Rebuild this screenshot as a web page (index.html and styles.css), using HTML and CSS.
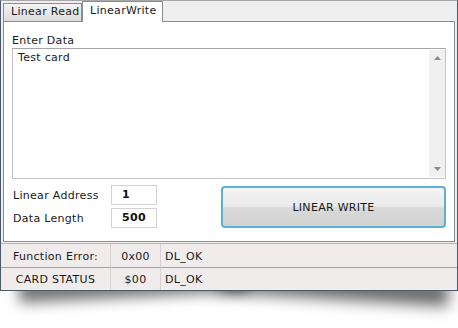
FILE: index.html
```html
<!DOCTYPE html>
<html>
<head>
<meta charset="utf-8">
<link rel="stylesheet" href="styles.css">
</head>
<body>
<div class="window">
  <div class="tabs">
    <div class="tab">Linear Read</div>
    <div class="tab active">LinearWrite</div>
  </div>
  <div class="panel">
    <div class="label">Enter Data</div>
    <div class="textbox">
      <div class="textbox-text">Test card</div>
      <div class="scrollbar">
        <svg width="7" height="4" viewBox="0 0 7 4"><path d="M0 4 L3.5 0 L7 4 Z" fill="#8a8a8a"/></svg>
        <svg width="7" height="4" viewBox="0 0 7 4"><path d="M0 0 L3.5 4 L7 0 Z" fill="#8a8a8a"/></svg>
      </div>
    </div>
    <div class="bottom">
      <div class="fields">
        <div class="field"><span class="field-label">Linear Address</span><span class="input">1</span></div>
        <div class="field"><span class="field-label">Data Length</span><span class="input">500</span></div>
      </div>
      <div class="button">LINEAR WRITE</div>
    </div>
  </div>
  <div class="status">
    <div class="cell c1">Function Error:</div>
    <div class="cell c2">0x00</div>
    <div class="cell c3">DL_OK</div>
    <div class="cell c1 row2">CARD STATUS</div>
    <div class="cell c2 row2">$00</div>
    <div class="cell c3 row2">DL_OK</div>
  </div>
</div>
<div class="shadow"></div>
</body>
</html>
```
FILE: styles.css
```css
html {
  background: #ffffff;
}
body {
  margin: 0;
  padding: 0;
  font-family: "DejaVu Sans", Verdana, sans-serif;
  font-size: 11px;
  letter-spacing: 0.3px;
  color: #1a1a1a;
}
.window {
  position: relative;
  z-index: 2;
  box-sizing: border-box;
  width: 458px;
  height: 291px;
  background: #eeeeee;
  border: 1px solid #4a5a66;
  border-top-color: #a8a8a8;
  display: flex;
  flex-direction: column;
}
.shadow {
  position: relative;
  z-index: 1;
  height: 37px;
  overflow: hidden;
}
.shadow::before,
.shadow::after {
  content: "";
  position: absolute;
  top: -34px;
  width: 50%;
  height: 24px;
  background: #666;
}
.shadow::before {
  left: 18px;
  transform: rotate(-3deg);
  box-shadow: 0 16px 14px rgba(0, 0, 0, 0.55);
}
.shadow::after {
  right: 8px;
  transform: rotate(3.6deg);
  box-shadow: 0 18px 15px rgba(0, 0, 0, 0.6);
}
.tabs {
  height: 20px;
  display: flex;
  align-items: flex-end;
  padding-left: 2px;
}
.tab {
  box-sizing: border-box;
  height: 18px;
  width: 79px;
  padding-left: 7px;
  line-height: 16px;
  border: 1px solid #8c8c8c;
  border-bottom: none;
  background: linear-gradient(#f4f4f4, #dcdcdc);
  color: #1a1a1a;
  white-space: nowrap;
  overflow: hidden;
}
.tab.active {
  position: relative;
  z-index: 1;
  height: 21px;
  width: 81px;
  margin-bottom: -1px;
  background: #ffffff;
  line-height: 18px;
}
.panel {
  box-sizing: border-box;
  margin: 0 2px;
  height: 221px;
  background: #ffffff;
  border: 1px solid #8c8c8c;
  padding: 12px 8px 0 8px;
}
.label {
  line-height: 13px;
  height: 13px;
  margin-bottom: 1px;
}
.textbox {
  box-sizing: border-box;
  height: 131px;
  border: 1px solid #c4c4c4;
  border-top-color: #a6a6a6;
  display: flex;
  justify-content: space-between;
}
.textbox-text {
  padding: 2px 5px;
  line-height: 13px;
}
.scrollbar {
  width: 16px;
  margin: 1px 0;
  background: #f0f0f0;
  display: flex;
  flex-direction: column;
  justify-content: space-between;
  align-items: center;
  padding: 6px 0;
}
.bottom {
  display: flex;
  margin-top: 6px;
}
.fields {
  display: flex;
  flex-direction: column;
  gap: 3px;
}
.field {
  display: flex;
  align-items: center;
  height: 20px;
  padding-left: 1px;
}
.field-label {
  width: 98px;
}
.input {
  box-sizing: border-box;
  width: 46px;
  height: 20px;
  border: 1px solid #d2d2d2;
  padding-left: 10px;
  line-height: 18px;
  font-weight: bold;
  color: #111;
}
.button {
  box-sizing: border-box;
  margin-left: auto;
  margin-top: 1px;
  width: 225px;
  height: 42px;
  border: 2px solid #58b2d6;
  border-radius: 4px;
  background: linear-gradient(#f4f4f4 0%, #e9e9e9 48%, #d9d9d9 52%, #d2d2d2 100%);
  display: flex;
  align-items: center;
  justify-content: center;
  color: #1a1a1a;
}
.status {
  margin-top: 1px;
  border-top: 1px solid #b4b4b4;
  flex: 1;
  display: grid;
  grid-template-columns: 110px 50px 1fr;
  grid-template-rows: 23px 1fr;
  background: #f0ecec;
}
.cell {
  box-sizing: border-box;
  display: flex;
  align-items: center;
  padding-top: 2px;
  border-right: 1px solid #d6d2d2;
}
.c1, .c2 {
  justify-content: center;
}
.c3 {
  padding-left: 4px;
  border-right: none;
}
.row2 {
  border-top: 1px solid #a4a4a4;
  padding-top: 0;
}
```
